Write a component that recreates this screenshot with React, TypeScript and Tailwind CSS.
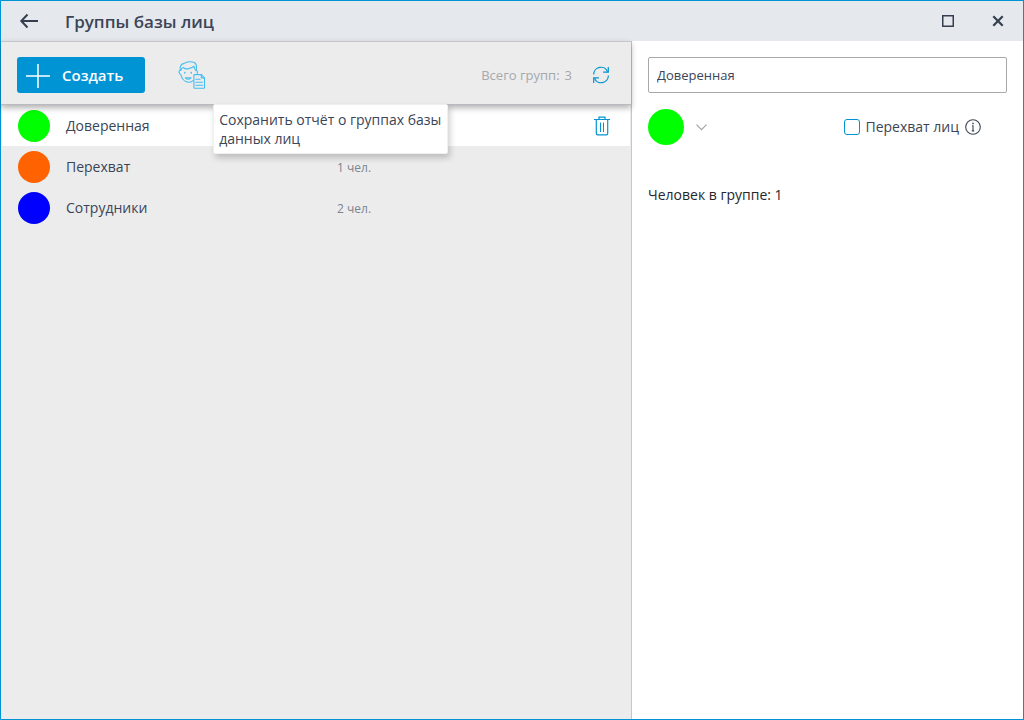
import { useState } from "react";

type Group = { id: number; name: string; color: string; count: number };

const groups: Group[] = [
  { id: 1, name: "Доверенная", color: "bg-[#00ff00]", count: 1 },
  { id: 2, name: "Перехват", color: "bg-[#ff6200]", count: 1 },
  { id: 3, name: "Сотрудники", color: "bg-[#0000ff]", count: 2 },
];

function BackIcon() {
  return (
    <svg width="20" height="16" viewBox="0 0 20 16" fill="none" stroke="currentColor" strokeWidth="2">
      <path d="M8.5 1.5 2.3 8l6.2 6.5M2.5 8H19" />
    </svg>
  );
}

function PlusIcon() {
  return (
    <svg width="24" height="24" viewBox="0 0 24 24" fill="none" stroke="currentColor" strokeWidth="1.5">
      <path d="M12 0v24M0 12h24" />
    </svg>
  );
}

function FaceReportIcon() {
  return (
    <svg width="28" height="28" viewBox="0 0 28 28" fill="none" stroke="#45bdf0" strokeWidth="1.1" strokeLinejoin="round" strokeLinecap="round">
      <path d="M2.5 9.5C1.3 5.8 3 2.8 6.3 2.4 8.8 0.3 14 .3 16.3 1.6c2.6 1.2 2.5 4.4 2 7.7" />
      <path d="M3 9.2c.2-1.4.9-2.3 2.2-2.7 1.8 1.5 4.3 1.6 6.3.9 1.8-.5 3.4-1.3 4.5-2.2.2 1.9.9 3 1.6 4" />
      <path d="M2.6 9.3C.5 9.3.3 12.6 2.8 13.6c.8 3.6 3.6 7.3 7.6 7.7 2 .1 3.4-.6 4.6-1.7M18 9.3c1.2 0 1.6 1.3 1.3 3.2" />
      <path d="M6.8 11.5v.6M13.2 11.5v.6" strokeWidth="1.5" />
      <path d="M7.3 16.8c1.8 1.8 4 1.8 5.8 0z" />
      <path d="M16.7 13.6h6.7l3.1 3.2v9.7q0 .8-.8.8h-9q-.8 0-.8-.8V14.4q0-.8.8-.8z" fill="#ececec" />
      <path d="M23.3 13.8v3.1h3M17.8 18.3h4.2M17.8 21.2h6.7M17.8 24.2h6.7" />
    </svg>
  );
}

function RefreshIcon() {
  return (
    <svg width="18" height="18" viewBox="0 0 18 18" fill="none" stroke="currentColor" strokeWidth="1.2">
      <path d="M1.7 8.4a7.2 7.2 0 0 1 13.9-2.6M16.4 9.6a7.2 7.2 0 0 1-13.9 2.6" />
      <path d="M16.3 1v5.2h-5.2M1.7 17v-5.2h5.2" />
    </svg>
  );
}

function TrashIcon() {
  return (
    <svg width="16" height="20" viewBox="0 0 16 20" fill="none" stroke="currentColor" strokeWidth="1.2">
      <path d="M0 3.5h16M5 3.2V1.1h6v2.1M2.3 3.6v14q0 1.3 1.3 1.3h8.8q1.3 0 1.3-1.3v-14" />
      <path d="M6.5 6.5v9.5M9.5 6.5v9.5" strokeWidth="1" />
    </svg>
  );
}

function InfoIcon() {
  return (
    <svg width="16" height="16" viewBox="0 0 16 16" fill="none" stroke="currentColor" strokeWidth="1.1">
      <circle cx="8" cy="8" r="7.3" />
      <path d="M7 6.7h1v5.1M6.8 11.9h2.4" />
      <path d="M8 3.8v1.4" strokeWidth="1.5" />
    </svg>
  );
}

export default function App() {
  const [selectedId, setSelectedId] = useState(1);
  const [name, setName] = useState("Доверенная");
  const [intercept, setIntercept] = useState(false);
  const selected = groups.find((g) => g.id === selectedId) ?? groups[0];

  const select = (group: Group) => {
    setSelectedId(group.id);
    setName(group.name);
  };

  return (
    <div className="flex min-h-screen flex-col border border-[#0094d4] bg-white font-['Open_Sans','Noto_Sans',sans-serif] text-sm text-[#3b4556]">
      <header className="flex h-10 items-center bg-[#e5e8ed] pr-4 pl-4.5">
        <button type="button" aria-label="Назад" className="text-[#353f50]">
          <BackIcon />
        </button>
        <h1 className="ml-6.5 flex-1 pt-0.5 text-[17px] font-semibold">Группы базы лиц</h1>
        <button type="button" aria-label="Развернуть" className="text-[#353f50]">
          <svg width="12" height="12" viewBox="0 0 12 12" fill="none" stroke="currentColor" strokeWidth="1.5">
            <path d="M.75.75h10.5v10.5H.75z" />
          </svg>
        </button>
        <button type="button" aria-label="Закрыть" className="ml-[33px] p-1 pr-0.5 text-[#353f50]">
          <svg width="14" height="12" viewBox="0 0 14 12" fill="none" stroke="currentColor" strokeWidth="2.2">
            <path d="m2.3 1.2 9.4 9.6M11.7 1.2 2.3 10.8" />
          </svg>
        </button>
      </header>

      <div className="flex flex-1">
        <main className="flex flex-1 flex-col bg-[#ececec]">
          <div className="relative z-10 flex h-16 items-center border-t border-b border-t-[#c4c6cc] border-b-[#b9bac2] bg-[#ececec] pt-1 pr-[21px] pl-4 shadow-[0_3px_6px_rgba(0,0,0,0.3)]">
            <button
              type="button"
              className="flex h-9 items-center gap-3 rounded-[3px] bg-[#0094d4] pr-[22px] pl-[9px] pt-px text-[15px] font-semibold text-white"
            >
              <PlusIcon />
              Создать
            </button>
            <div className="relative ml-[33px] flex">
              <button type="button" aria-label="Сохранить отчёт" aria-describedby="report-tip">
                <FaceReportIcon />
              </button>
              <div
                id="report-tip"
                role="tooltip"
                className="absolute top-full left-[35px] mt-[15px] w-[235px] rounded-xs border border-[#f0f0f0] bg-white px-[5px] pt-[5px] pb-[5px] leading-[19px] shadow-[2px_4px_6px_rgba(0,0,0,0.2)]"
              >
                Сохранить отчёт о группах базы данных лиц
              </div>
            </div>
            <span className="ml-auto flex gap-[5px] text-[13px] text-[#a6a8ac]">
              <span>Всего групп:</span>
              <span>{groups.length}</span>
            </span>
            <button type="button" aria-label="Обновить" className="ml-5 text-[#0094d4]">
              <RefreshIcon />
            </button>
          </div>

          <ul className="px-px">
            {groups.map((group) => (
              <li
                key={group.id}
                className={
                  group.id === selectedId
                    ? "flex h-[41px] items-center bg-white pr-5"
                    : "flex h-[41px] items-center pr-5"
                }
              >
                <button
                  type="button"
                  onClick={() => select(group)}
                  className="grid flex-1 grid-cols-[32px_255px_1fr] items-center gap-4 pl-4 text-left"
                >
                  <span className={`size-8 rounded-full ${group.color}`} />
                  <span>{group.name}</span>
                  {group.id !== selectedId && (
                    <span className="pt-0.5 text-xs text-[#7b8492]">{group.count} чел.</span>
                  )}
                </button>
                {group.id === selectedId && (
                  <button type="button" aria-label="Удалить" className="text-[#0094d4]">
                    <TrashIcon />
                  </button>
                )}
              </li>
            ))}
          </ul>
        </main>

        <aside className="w-98 border-l border-[#c4c6cc] bg-white p-4">
          <input
            type="text"
            aria-label="Название группы"
            value={name}
            onChange={(e) => setName(e.target.value)}
            className="h-9 w-full rounded-xs border border-[#a8a8a8] px-2 text-[13px] outline-none"
          />
          <div className="mt-4 flex items-center">
            <button type="button" aria-label="Цвет группы" className="flex items-center gap-3 text-[#a0a4ac]">
              <span className={`size-9 rounded-full ${selected.color}`} />
              <svg width="11" height="7" viewBox="0 0 11 7" fill="none" stroke="currentColor" strokeWidth="1.2">
                <path d="m.5.7 5 5 5-5" />
              </svg>
            </button>
            <label className="ml-auto flex items-center gap-[5px]">
              <input
                type="checkbox"
                checked={intercept}
                onChange={(e) => setIntercept(e.target.checked)}
                className="size-4 appearance-none rounded-[3px] border border-[#0094d4] bg-white checked:bg-[#0094d4]"
              />
              Перехват лиц
            </label>
            <button type="button" aria-label="Справка" className="mr-6.5 ml-1.5">
              <InfoIcon />
            </button>
          </div>
          <p className="mt-10 text-[#26272b]">Человек в группе: {selected.count}</p>
        </aside>
      </div>
    </div>
  );
}
